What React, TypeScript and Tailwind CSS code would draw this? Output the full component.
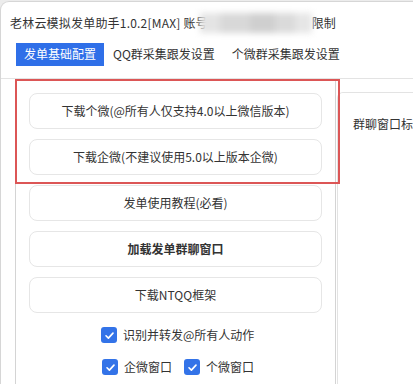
import React from "react";

const font = { fontFamily: '"Noto Sans CJK SC", "Noto Sans", sans-serif' };

function Check() {
  return (
    <span className="flex h-4 w-4 items-center justify-center rounded-[3px] bg-[#3373e8]">
      <svg width="11" height="11" viewBox="0 0 12 12" fill="none">
        <path d="M2.2 6.3 L4.8 8.8 L9.8 3.4" stroke="white" strokeWidth="1.8" strokeLinecap="round" strokeLinejoin="round" />
      </svg>
    </span>
  );
}

function Btn({ children, bold }: { children: React.ReactNode; bold?: boolean }) {
  return (
    <div
      className={`flex h-[36px] items-center justify-center rounded-[8px] border border-[#e6e6e6] bg-white text-[12px] text-[#333] ${bold ? "font-bold" : ""}`}
    >
      {children}
    </div>
  );
}

export default function App() {
  return (
    <div className="h-[384px] w-[413px] overflow-hidden bg-[#ececec]" style={font}>
      <div className="relative mt-[1px] h-[383px] w-[413px] overflow-hidden rounded-tl-[9px] border-l border-t border-[#d6d6d6] bg-white">
        <div className="flex h-[40px] items-center pl-[9px] pt-[1px] text-[12px] text-[#333]">
          <span className="tracking-[0.2px]">老林云模拟发单助手1.0.2[MAX] 账号</span>
          <span className="relative ml-[-8px] h-[20px] w-[112px]">
            <span className="absolute inset-0 flex blur-[3px]">
              <span className="h-full w-[20px] bg-[#e4e4e4]" />
              <span className="h-full w-[30px] bg-[#d8d8d8]" />
              <span className="h-full w-[25px] bg-[#cfcfcf]" />
              <span className="h-full w-[20px] bg-[#dadada]" />
              <span className="h-full w-[17px] bg-[#e6e6e6]" />
            </span>
          </span>
          <span>限制</span>
        </div>
        <div className="flex h-[24px] items-center pl-[15px] text-[12px] text-[#333]">
          <span className="flex h-[23px] items-center bg-[#2f6fe8] px-[8px] text-white">发单基础配置</span>
          <span className="ml-[9px]">QQ群采集跟发设置</span>
          <span className="ml-[17px]">个微群采集跟发设置</span>
        </div>
        <div className="mt-[12px] flex border-t border-[#e3e3e3]">
          <div className="ml-[14px] flex h-[320px] w-[326px] flex-col gap-[10px] border-x border-[#d4d4d4] px-[13px] pt-[14px]">
            <Btn>下载个微(@所有人仅支持4.0以上微信版本)</Btn>
            <Btn>下载企微(不建议使用5.0以上版本企微)</Btn>
            <Btn>发单使用教程(必看)</Btn>
            <Btn bold>加载发单群聊窗口</Btn>
            <Btn>下载NTQQ框架</Btn>
            <div className="mt-[3px] flex flex-col gap-[14px] pl-[72px] text-[12px] text-[#333]">
              <div className="flex items-center gap-[6px]">
                <Check />
                <span>识别并转发@所有人动作</span>
              </div>
              <div className="flex items-center">
                <span className="ml-[1px]"><Check /></span>
                <span className="ml-[6px]">企微窗口</span>
                <span className="ml-[12px]"><Check /></span>
                <span className="ml-[6px]">个微窗口</span>
              </div>
            </div>
          </div>
          <div className="flex-1 pl-[1px] pt-[13px]">
            <div className="h-[300px] rounded-tl-[6px] border-l border-t border-[#e3e3e3] pl-[15px] pt-[22px] text-[12px] text-[#333]">
              <span className="whitespace-nowrap">群聊窗口标</span>
            </div>
          </div>
        </div>
        <div className="absolute left-[14px] top-[77px] h-[105px] w-[325px] border-2 border-[#dc5656]" />
      </div>
    </div>
  );
}
